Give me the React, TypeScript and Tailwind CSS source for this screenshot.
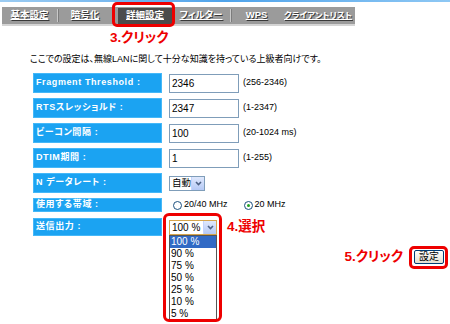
import React from 'react'

const font = "font-['Liberation_Sans','Noto_Sans_CJK_JP',sans-serif] [font-feature-settings:'palt']"

function Label({ children, h = 'h-[20px]' }: { children: React.ReactNode; h?: string }) {
  return (
    <div
      className={`${h} w-[129px] shrink-0 bg-[#1ba3f2] border border-[#45b8f8] pl-[2px] flex items-center text-[9px] font-bold text-white tracking-[0.6px] whitespace-nowrap`}
    >
      {children}
    </div>
  )
}

function Field({ value, range }: { value: string; range: string }) {
  return (
    <div className="flex items-center gap-[4px]">
      <div className="h-[19px] w-[70px] shrink-0 border border-[#7f9db9] bg-white pl-[2px] flex items-center text-[10px] text-black">
        {value}
      </div>
      <span className="text-[9px]">{range}</span>
    </div>
  )
}

function Chevron() {
  return (
    <div className="h-full w-[13px] shrink-0 bg-gradient-to-b from-[#dfe8fc] to-[#b5c9f5] border-l border-[#c3d3fd] flex items-center justify-center">
      <svg width="7" height="5" viewBox="0 0 7 5">
        <path d="M1 1 L3.5 3.5 L6 1" stroke="#4d6185" strokeWidth="1.6" fill="none" />
      </svg>
    </div>
  )
}

function Radio({ checked }: { checked?: boolean }) {
  return (
    <span className="inline-flex h-[9px] w-[9px] items-center justify-center rounded-full border border-[#1c5180] bg-white">
      {checked && <span className="h-[3px] w-[3px] rounded-full bg-[#21a121]" />}
    </span>
  )
}

function Tab({ w, size = 'text-[9.5px]', children }: { w: string; size?: string; children: React.ReactNode }) {
  return (
    <div className={`${w} ${size} shrink-0 flex justify-center whitespace-nowrap font-bold text-white underline [text-shadow:1px_1px_0_#3a3a3a]`}>
      {children}
    </div>
  )
}

function Sep() {
  return <div className="h-[13px] w-[1px] shrink-0 bg-[#c9c9c9] shadow-[1px_0_0_#7c7c7c]" />
}

export default function App() {
  const options = ['100 %', '90 %', '75 %', '50 %', '25 %', '10 %', '5 %']

  return (
    <div className={`relative h-[324px] w-[450px] overflow-hidden bg-white text-black ${font}`}>
      <div className="h-[2px] w-full bg-gradient-to-r from-[#9cccf2] via-[#4fa3ea] to-[#8ec8f4]" />

      {/* tab bar */}
      <div className="ml-[2px] mt-[5px] flex h-[17px] w-[353px] items-center bg-[#9b9b9b] shadow-[0_2px_0_#d4d4d4]">
        <Tab w="w-[55px]">基本設定</Tab>
        <Sep />
        <Tab w="w-[54px]">暗号化</Tab>
        <div className="ml-[6px] flex h-[16px] w-[54px] shrink-0 items-center justify-center bg-[#4c4c4c] text-[9.5px] font-bold text-white underline">
          詳細設定
        </div>
        <Tab w="w-[58px]">フィルター</Tab>
        <Sep />
        <Tab w="w-[51px]">WPS</Tab>
        <Tab w="w-[72px]" size="text-[8.5px]">クライアントリスト</Tab>
      </div>
      <div className="absolute left-[112px] top-[2px] h-[25px] w-[63px] rounded-[5px] border-[3px] border-[#ee0000]" />

      <div className="ml-[110px] mt-[6px] h-[16px] text-[13.5px] font-bold leading-[16px] text-[#ee0000]">3.クリック</div>

      <p className="ml-[30px] mt-[7px] text-[9px] leading-[12px]">
        ここでの設定は、無線LANに関して十分な知識を持っている上級者向けです。
      </p>

      <div className="ml-[33px] mt-[8px] flex flex-col gap-[5px]">
        <div className="flex items-center gap-[7px]">
          <Label>Fragment Threshold :</Label>
          <Field value="2346" range="(256-2346)" />
        </div>
        <div className="flex items-center gap-[7px]">
          <Label>RTSスレッショルド :</Label>
          <Field value="2347" range="(1-2347)" />
        </div>
        <div className="flex items-center gap-[7px]">
          <Label>ビーコン間隔 :</Label>
          <Field value="100" range="(20-1024 ms)" />
        </div>
        <div className="flex items-center gap-[7px]">
          <Label>DTIM期間 :</Label>
          <Field value="1" range="(1-255)" />
        </div>
        <div className="flex items-center gap-[7px]">
          <Label>N データレート :</Label>
          <div className="flex h-[15px] w-[36px] items-center border border-[#7f9db9] bg-white">
            <span className="flex-1 whitespace-nowrap pl-[2px] text-[9.5px]">自動</span>
            <Chevron />
          </div>
        </div>
        <div className="flex items-center gap-[7px]">
          <Label h="h-[14px]">使用する帯域 :</Label>
          <div className="ml-[4px] flex items-center gap-[2px] text-[9px]">
            <Radio />
            <span>20/40 MHz</span>
          </div>
          <div className="ml-[9px] flex items-center gap-[2px] text-[9px]">
            <Radio checked />
            <span>20 MHz</span>
          </div>
        </div>
        <div className="flex items-center gap-[7px]">
          <Label h="h-[18px]">送信出力 :</Label>
          <div className="relative">
            <div className="flex h-[15px] w-[48px] items-center border border-[#d6a54c] bg-white">
              <span className="flex-1 whitespace-nowrap pl-[2px] text-[10px]">100 %</span>
              <Chevron />
            </div>
            <div className="absolute left-0 top-[15px] z-10 flex w-[48px] flex-col border border-[#555] bg-white">
              {options.map((o, i) => (
                <div
                  key={o}
                  className={`h-[12px] pl-[1px] text-[10px] leading-[12px] ${i === 0 ? 'bg-[#316ac5] text-white' : 'text-black'}`}
                >
                  {o}
                </div>
              ))}
            </div>
          </div>
          <span className="ml-[3px] text-[13.5px] font-bold text-[#ee0000]">4.選択</span>
        </div>
      </div>
      <div className="absolute left-[163px] top-[213px] z-20 h-[109px] w-[59px] rounded-[6px] border-[3px] border-[#ee0000]" />

      <div className="mt-[10px] flex items-center justify-end pr-[6px]">
        <span className="mr-[11px] text-[13.5px] font-bold text-[#ee0000]">5.クリック</span>
        <button
          type="button"
          className="flex h-[14px] w-[30px] items-center justify-center rounded-[2px] border border-[#003c74] bg-gradient-to-b from-white to-[#e3e0d2] text-[10px] leading-none"
        >
          設定
        </button>
      </div>
      <div className="absolute left-[409px] top-[246px] h-[23px] w-[39px] rounded-[5px] border-[3px] border-[#ee0000]" />
    </div>
  )
}
